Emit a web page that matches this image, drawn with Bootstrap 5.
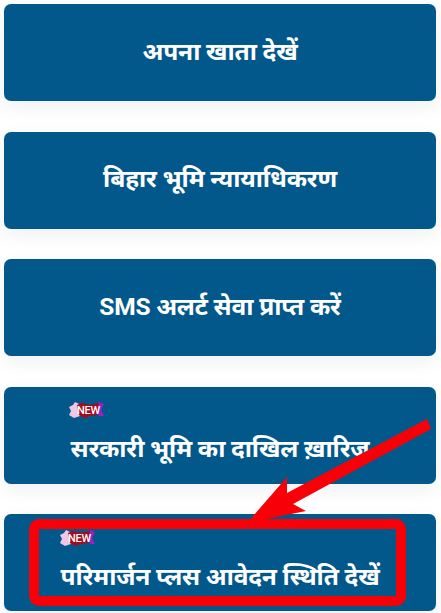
<!DOCTYPE html>
<html lang="hi">
<head>
<meta charset="utf-8">
<title>Bihar Bhumi</title>
<meta name="viewport" content="width=device-width, initial-scale=1">
<link href="https://cdn.jsdelivr.net/npm/bootstrap@5.3.0/dist/css/bootstrap.min.css" rel="stylesheet">
<style>
html,body{height:613px;overflow:hidden;background:#fff}
.stage{position:relative;padding:4px 5px 0 4px;gap:30.5px;height:613px}
.tile{height:97px;padding-bottom:2px;background:#02588b;border-radius:7px;color:#fff;box-shadow:0 6px 18px rgba(30,40,70,.07);font-family:Roboto,"Noto Sans","Noto Sans Devanagari","Liberation Sans",sans-serif;font-weight:700;font-size:24.5px;line-height:1.2;text-decoration:none;letter-spacing:-.2px;position:relative}
.tile:hover{color:#fff}
.tagged{padding-top:28px;padding-bottom:0}
.newtag{position:absolute;width:37px;height:18px;display:block}
.tag-a{left:64px;top:14px}
.tag-b{left:55px;top:15px}
.newtxt{font:500 11px Roboto,"Liberation Sans",sans-serif;fill:#fff}
.overlay{position:absolute;left:0;top:0;width:441px;height:613px;pointer-events:none}
</style>
</head>
<body>
<main class="stage d-flex flex-column">
<a class="tile d-flex align-items-center justify-content-center" href="#">अपना खाता देखें</a>
<a class="tile d-flex align-items-center justify-content-center" href="#">बिहार भूमि न्यायाधिकरण</a>
<a class="tile d-flex align-items-center justify-content-center" href="#">SMS अलर्ट सेवा प्राप्त करें</a>
<a class="tile tagged d-flex align-items-center justify-content-center" href="#">
<svg class="newtag tag-a" viewBox="0 0 37 18"><path d="M1 6 5 4 7 1 11 3 10 9 12 15 6 17 1 14 3 10Z" fill="#efc6e4"/><path d="M9 4 14 2 22 4 31 2 32 8 29 14 22 15 17 17 11 14Z" fill="#a80a1c"/><path d="M31 1 36 3 33 9 36 15 31 15 30 9Z" fill="#9a22c4"/><text class="newtxt" x="9" y="13" textLength="23">NEW</text></svg>
सरकारी भूमि का दाखिल ख़ारिज</a>
<a class="tile tagged d-flex align-items-center justify-content-center" href="#">
<svg class="newtag tag-b" viewBox="0 0 37 18"><path d="M1 6 5 4 7 1 11 3 10 9 12 15 6 17 1 14 3 10Z" fill="#efc6e4"/><path d="M9 4 14 2 22 4 31 2 32 8 29 14 22 15 17 17 11 14Z" fill="#a80a1c"/><path d="M31 1 36 3 33 9 36 15 31 15 30 9Z" fill="#9a22c4"/><text class="newtxt" x="9" y="13" textLength="23">NEW</text></svg>
परिमार्जन प्लस आवेदन स्थिति देखें</a>
<svg class="overlay" viewBox="0 0 441 613">
<rect x="34" y="524" width="367" height="77" rx="5" fill="none" stroke="#f80007" stroke-width="10"/>
<path d="M247 523 287 477 287 493 427 419 431 429 293 504 306 511Z" fill="#f80007"/>
</svg>
</main>
</body>
</html>
